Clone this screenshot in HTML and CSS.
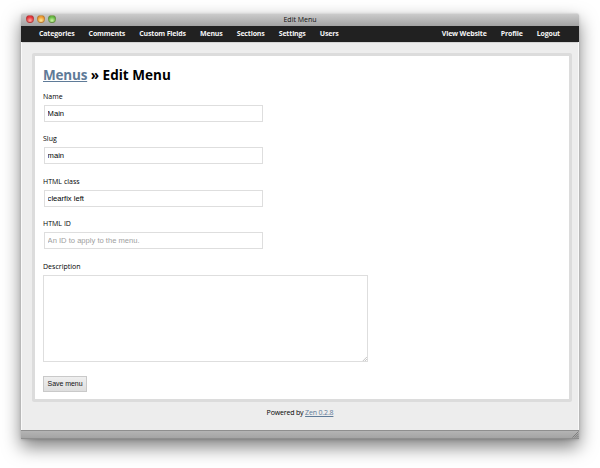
FILE: index.html
```html
<!DOCTYPE html>
<html lang="en">
<head>
<meta charset="utf-8">
<title>Edit Menu</title>
<link rel="stylesheet" href="styles.css">
</head>
<body>
<div class="window">
  <header class="titlebar">
    <div class="lights"><i class="light red"></i><i class="light amber"></i><i class="light green"></i></div>
    <span class="title">Edit Menu</span>
  </header>
  <nav class="nav">
    <a>Categories</a><a>Comments</a><a>Custom Fields</a><a>Menus</a><a>Sections</a><a>Settings</a><a>Users</a>
    <a class="push">View Website</a><a>Profile</a><a>Logout</a>
  </nav>
  <div class="page">
    <main class="panel">
      <h1><a class="link">Menus</a> » Edit Menu</h1>
      <form>
        <div class="field"><label for="name">Name</label><input id="name" type="text" value="Main"></div>
        <div class="field"><label for="slug">Slug</label><input id="slug" type="text" value="main"></div>
        <div class="field"><label for="class">HTML class</label><input id="class" type="text" value="clearfix left"></div>
        <div class="field"><label for="id">HTML ID</label><input id="id" type="text" placeholder="An ID to apply to the menu."></div>
        <div class="area">
          <label for="description">Description</label>
          <textarea id="description"></textarea>
          <svg class="grip" viewBox="0 0 6 6"><path d="M1 6L6 1M3.5 6L6 3.5"/></svg>
        </div>
        <button type="button">Save menu</button>
      </form>
    </main>
    <footer class="footer">Powered by <a class="link">Zen 0.2.8</a></footer>
  </div>
  <div class="statusbar">
    <svg class="resize" viewBox="0 0 8 8"><path d="M0.5 7.5L7.5 0.5M3 7.5L7.5 3M5.5 7.5L7.5 5.5"/></svg>
  </div>
</div>
</body>
</html>
```
FILE: styles.css
```css
* { box-sizing: border-box; }
body {
  margin: 0;
  height: 468px;
  padding: 13px 21px 29px;
  overflow: hidden;
  background: #fff;
  color: #000;
  font-family: "Open Sans", "Noto Sans", sans-serif;
  font-size: 7px;
}
.window {
  display: flex;
  flex-direction: column;
  height: 426px;
  border-radius: 2px 2px 0 0;
  box-shadow: 0 8px 18px rgba(0, 0, 0, .5), 0 1px 3px rgba(0, 0, 0, .15);
}
.titlebar {
  display: grid;
  grid-template-columns: 1fr auto 1fr;
  align-items: center;
  height: 13px;
  padding: 0 4px;
  border-top: 1px solid #d9d9d9;
  border-radius: 2px 2px 0 0;
  background: linear-gradient(#cbcbcb, #a3a3a3);
}
.title { line-height: 12px; color: #111; }
.lights { display: flex; gap: 3px; padding: 0 0 2px .5px; }
.light {
  width: 8px;
  height: 8px;
  border: 1px solid rgba(90, 60, 50, .35);
  border-radius: 50%;
}
.red { background: radial-gradient(circle at 50% 75%, #ffaaa2, #e6343b 65%); }
.amber { background: radial-gradient(circle at 50% 75%, #ffea9a, #ee9b32 65%); }
.green { background: radial-gradient(circle at 50% 75%, #ccf6a2, #65b944 65%); }
.nav {
  display: flex;
  gap: 14.1px;
  height: 16px;
  padding: 0 19px 0 18px;
  background: #212121;
  color: #f5f5f5;
  font-weight: 700;
  line-height: 16px;
  letter-spacing: -.16px;
  white-space: nowrap;
}
.push { margin-left: auto; }
.page {
  flex: 1;
  padding: 11px 7px 0 11px;
  border: solid #f9f9f9;
  border-width: 0 1px;
  box-shadow: inset 0 1px #d5d5d5;
  background: #ededed;
}
.panel {
  width: 540px;
  height: 349px;
  margin-left: -1px;
  padding: 10px 8px;
  border: 3px solid #dcdcdc;
  border-radius: 2px;
  background: #fff;
}
h1 {
  margin: 0 0 7px;
  color: #000;
  font-size: 13.5px;
  line-height: 18px;
  letter-spacing: .02px;
}
h1 .link { letter-spacing: -.2px; }
.link { color: #5f7b98; text-decoration: underline; text-underline-offset: 1px; }
label { display: block; height: 14px; padding-top: 1px; line-height: 10px; letter-spacing: .02px; }
.field { height: 42.4px; }
input {
  display: block;
  width: 219px;
  height: 17px;
  margin-left: 1px;
  padding: 0 2.6px;
  border: 1px solid #dedede;
  border-radius: 0;
  background: #fff;
  color: #000;
  font: 7.6px "Liberation Sans", sans-serif;
}
input::placeholder { color: #a0a0a0; }
.area { position: relative; width: 325px; height: 115.4px; }
textarea {
  display: block;
  width: 325px;
  height: 87px;
  border: 1px solid #dedede;
  background: #fff;
  resize: none;
}
.grip { position: absolute; right: 1px; bottom: 15.4px; width: 5px; height: 5px; stroke: #999; stroke-width: .7; fill: none; }
button {
  display: block;
  width: 44px;
  height: 16px;
  padding: 0;
  border: 1px solid #c9c9c9;
  border-radius: 0;
  background: linear-gradient(#efefef, #dedede);
  color: #111;
  font: 7px "Liberation Sans", sans-serif;
  letter-spacing: -.05px;
}
.footer { padding: 6px 4px 0 0; line-height: 10px; text-align: center; letter-spacing: -.16px; }
.statusbar {
  display: flex;
  justify-content: flex-end;
  align-items: flex-end;
  height: 9px;
  border: solid #8e8e8e;
  border-width: 1px 0;
  background: linear-gradient(#b4b4b4, #a4a4a4);
}
.resize { width: 7px; height: 7px; stroke: #777; stroke-width: 1; fill: none; }
```
